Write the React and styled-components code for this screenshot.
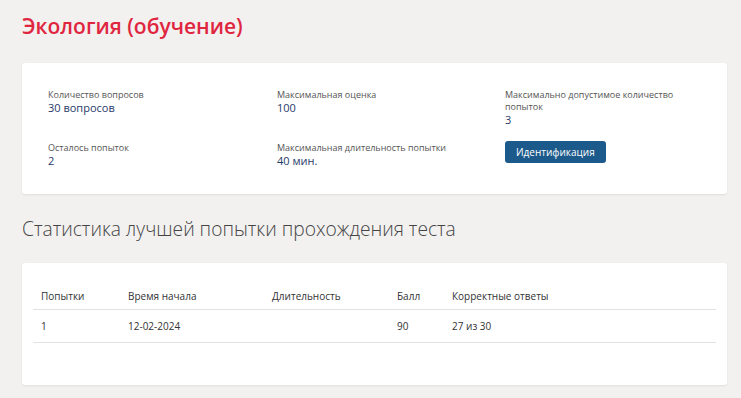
import styled, { createGlobalStyle } from 'styled-components';

const GlobalStyle = createGlobalStyle`
  body {
    margin: 0;
    background: #f2f1f0;
    font-family: 'Open Sans', 'Liberation Sans', sans-serif;
  }
`;

const Page = styled.div`
  padding: 12px 14px 14px 22px;
`;

const Title = styled.h1`
  margin: 0 0 23px;
  font-size: 21px;
  line-height: 28px;
  font-weight: 600;
  color: #e0263f;
`;

const Card = styled.div`
  background: #fff;
  border-radius: 3px;
  box-shadow: 0 1px 2px rgba(0, 0, 0, 0.08);
  padding: ${(p) => p.$pad};
`;

const InfoGrid = styled.div`
  display: grid;
  grid-template-columns: 229px 228px 1fr;
  row-gap: 16px;
`;

const Cell = styled.div`
  display: flex;
  flex-direction: column;
  max-width: 175px;
`;

const Label = styled.span`
  font-size: 9px;
  line-height: 12px;
  color: #555;
`;

const Value = styled.span`
  font-size: 11px;
  line-height: 13px;
  color: #1f3a68;
  font-weight: 500;
`;

const Button = styled.button`
  align-self: flex-start;
  height: 22px;
  padding: 0 11px;
  margin-top: -1px;
  border: none;
  border-radius: 3px;
  background: #1d5a8c;
  color: #fff;
  font-family: inherit;
  font-size: 10px;
  cursor: pointer;
`;

const Subtitle = styled.h2`
  margin: 22px 0 21px;
  font-size: 19.2px;
  line-height: 26px;
  font-weight: 300;
  color: #444;
`;

const Table = styled.table`
  width: 100%;
  border-collapse: collapse;
  table-layout: fixed;
  font-size: 10px;
  color: #333;
`;

const Th = styled.th`
  box-sizing: border-box;
  text-align: left;
  font-weight: 500;
  padding: 0 8px;
  height: 26px;
  vertical-align: middle;
  border-bottom: 1px solid #e2e2e2;
  width: ${(p) => p.$w || 'auto'};
`;

const Td = styled.td`
  padding: 0 8px;
  height: 32px;
  border-bottom: 1px solid #e2e2e2;
`;

const info = [
  { label: 'Количество вопросов', value: '30 вопросов' },
  { label: 'Максимальная оценка', value: '100' },
  { label: 'Максимально допустимое количество попыток', value: '3' },
  { label: 'Осталось попыток', value: '2' },
  { label: 'Максимальная длительность попытки', value: '40 мин.' },
];

const columns = [
  { title: 'Попытки', w: '87px' },
  { title: 'Время начала', w: '144px' },
  { title: 'Длительность', w: '125px' },
  { title: 'Балл', w: '55px' },
  { title: 'Корректные ответы' },
];

const rows = [['1', '12-02-2024', '', '90', '27 из 30']];

export default function App() {
  return (
    <>
      <GlobalStyle />
      <Page>
        <Title>Экология (обучение)</Title>
        <Card $pad="26px 26px 27px 26px">
          <InfoGrid>
            {info.map((item) => (
              <Cell key={item.label}>
                <Label>{item.label}</Label>
                <Value>{item.value}</Value>
              </Cell>
            ))}
            <Cell>
              <Button>Идентификация</Button>
            </Cell>
          </InfoGrid>
        </Card>
        <Subtitle>Статистика лучшей попытки прохождения теста</Subtitle>
        <Card $pad="20px 11px 42px 11px">
          <Table>
            <thead>
              <tr>
                {columns.map((c) => (
                  <Th key={c.title} $w={c.w}>
                    {c.title}
                  </Th>
                ))}
              </tr>
            </thead>
            <tbody>
              {rows.map((r) => (
                <tr key={r[0]}>
                  {r.map((v, i) => (
                    <Td key={i}>{v}</Td>
                  ))}
                </tr>
              ))}
            </tbody>
          </Table>
        </Card>
      </Page>
    </>
  );
}
